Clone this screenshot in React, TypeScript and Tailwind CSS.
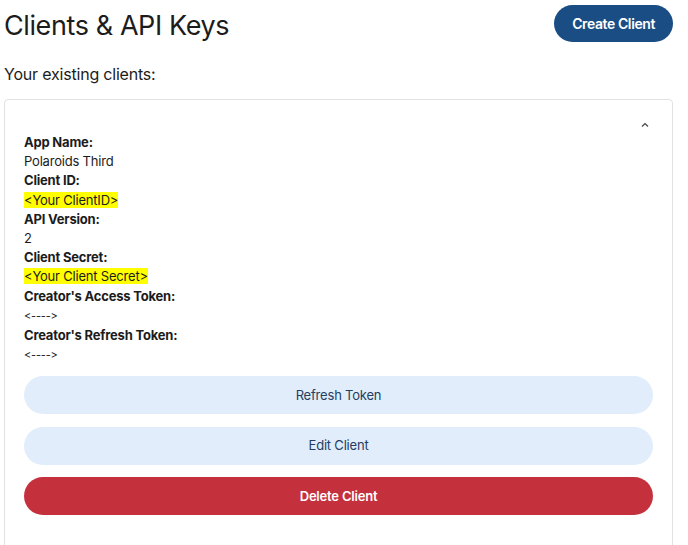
export default function App() {
  const rows: { label: string; value: string; mark?: boolean; small?: boolean }[] = [
    { label: 'App Name:', value: 'Polaroids Third' },
    { label: 'Client ID:', value: '<Your ClientID>', mark: true },
    { label: 'API Version:', value: '2' },
    { label: 'Client Secret:', value: '<Your Client Secret>', mark: true },
    { label: "Creator's Access Token:", value: '<---->', small: true },
    { label: "Creator's Refresh Token:", value: '<---->', small: true },
  ];

  return (
    <div className="min-h-screen bg-white text-[#1c1c1c] font-['Inter',sans-serif] pl-1 pr-[15px] pt-[5px] overflow-hidden">
      {/* Header */}
      <div className="flex items-start justify-between">
        <h1 className="text-[27px] leading-[37px] font-normal tracking-[-0.4px] mt-[2px]">Clients &amp; API Keys</h1>
        <button className="h-[37px] px-[18px] rounded-full bg-[#1a4d84] text-white text-[14px] font-semibold tracking-[-0.4px]">
          Create Client
        </button>
      </div>
      <p className="text-[16px] leading-[20px] mt-[20px] tracking-[-0.2px]">Your existing clients:</p>

      {/* Client card */}
      <div className="mt-[15px] border border-[#e2e2e0] rounded-[4px] h-[460px] px-[19px] pt-[20px]">
        <div className="flex justify-end pr-[4px] h-[13px]">
          <svg width="8" height="6" viewBox="0 0 8 6" className="mt-[2px]">
            <path d="M1 4.5 L4 1.5 L7 4.5" fill="none" stroke="#444" strokeWidth="1.2" />
          </svg>
        </div>
        <div className="text-[13px] leading-[19.2px] tracking-[-0.2px]">
          {rows.map((r) => (
            <div key={r.label}>
              <div className="font-bold">{r.label}</div>
              <div>
                {r.mark ? (
                  <span className="bg-[#ffff00]">{r.value}</span>
                ) : (
                  <span className={r.small ? 'text-[11px]' : ''}>{r.value}</span>
                )}
              </div>
            </div>
          ))}
        </div>

        <div className="flex flex-col gap-[12.5px] mt-[11px]">
          <button className="h-[38px] rounded-full bg-[#e1edfa] text-[#243d63] text-[13px] tracking-[-0.2px]">
            Refresh Token
          </button>
          <button className="h-[38px] rounded-full bg-[#e1edfa] text-[#243d63] text-[13px] tracking-[-0.2px]">
            Edit Client
          </button>
          <button className="h-[38px] rounded-full bg-[#c4303c] text-white text-[13px] font-semibold tracking-[-0.2px]">
            Delete Client
          </button>
        </div>
      </div>
    </div>
  );
}
